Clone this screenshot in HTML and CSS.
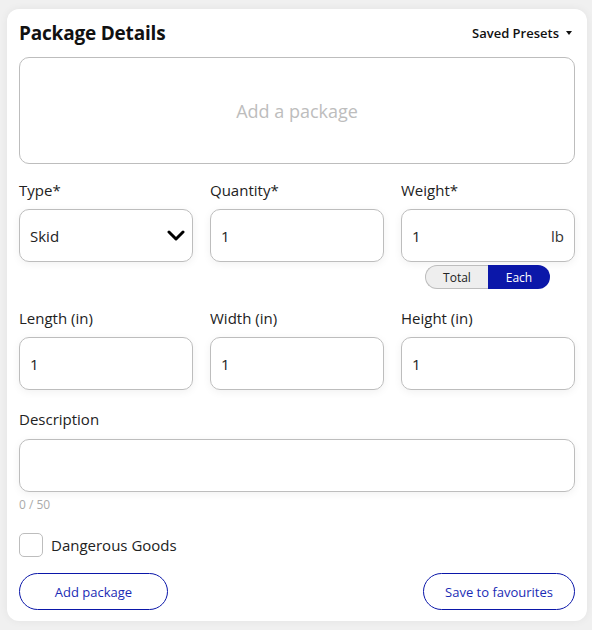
FILE: index.html
```html
<!DOCTYPE html>
<html lang="en">
<head>
    <meta charset="UTF-8">
    <title>Package Details</title>
    <link rel="stylesheet" href="styles.css">
</head>
<body>
    <div class="card">
        <div class="card-header">
            <h2>Package Details</h2>
            <span class="presets">Saved Presets <span class="caret"></span></span>
        </div>

        <div class="add-box">Add a package</div>

        <div class="row first-row">
            <div class="field">
                <label>Type*</label>
                <div class="input select">
                    <span>Skid</span>
                    <svg width="18" height="12" viewBox="0 0 18 12">
                        <polyline points="2,2 9,9 16,2" fill="none" stroke="#000" stroke-width="3" stroke-linecap="round" stroke-linejoin="round"/>
                    </svg>
                </div>
            </div>
            <div class="field">
                <label>Quantity*</label>
                <div class="input">1</div>
            </div>
            <div class="field">
                <label>Weight*</label>
                <div class="input">
                    <span>1</span>
                    <span class="unit">lb</span>
                </div>
                <div class="toggle">
                    <span class="toggle-off">Total</span>
                    <span class="toggle-on">Each</span>
                </div>
            </div>
        </div>

        <div class="row">
            <div class="field">
                <label>Length (in)</label>
                <div class="input">1</div>
            </div>
            <div class="field">
                <label>Width (in)</label>
                <div class="input">1</div>
            </div>
            <div class="field">
                <label>Height (in)</label>
                <div class="input">1</div>
            </div>
        </div>

        <div class="field description">
            <label>Description</label>
            <div class="input"></div>
            <div class="counter">0 / 50</div>
        </div>

        <div class="check-row">
            <span class="checkbox"></span>
            <span>Dangerous Goods</span>
        </div>

        <div class="actions">
            <button>Add package</button>
            <button>Save to favourites</button>
        </div>
    </div>
</body>
</html>
```

FILE: styles.css
```css
body {
    margin: 0;
    padding: 9px 5px 9px 7px;
    background: #f0f0f0;
    font-family: "Open Sans", "Noto Sans", sans-serif;
    color: #222;
}

.card {
    background: white;
    border-radius: 12px;
    padding: 12px 12px 11px;
    box-shadow: 0 0 8px rgba(0, 0, 0, 0.06);
}

.card-header {
    display: flex;
    justify-content: space-between;
    align-items: center;
    height: 24px;
    margin-bottom: 12px;
}

.card-header h2 {
    margin: 0;
    font-size: 19px;
    font-weight: 700;
    color: #111;
    letter-spacing: -0.2px;
}

.presets {
    font-size: 13px;
    font-weight: 600;
    color: #111;
    padding-right: 3px;
    display: flex;
    align-items: center;
    gap: 7px;
}

.caret {
    width: 0;
    height: 0;
    border-left: 3px solid transparent;
    border-right: 3px solid transparent;
    border-top: 4px solid #111;
}

.add-box {
    height: 105px;
    border: 1px solid #bdbdbd;
    border-radius: 10px;
    display: flex;
    align-items: center;
    justify-content: center;
    font-size: 18px;
    color: #bdbdbd;
}

.row {
    display: grid;
    grid-template-columns: repeat(3, 1fr);
    column-gap: 17px;
    margin-top: 17px;
}

.first-row {
    margin-top: 14px;
}

.field label {
    display: block;
    font-size: 15px;
    line-height: 24px;
    margin-bottom: 7px;
}

.input {
    height: 51px;
    border: 1px solid #bdbdbd;
    border-radius: 10px;
    box-shadow: 0 2px 8px rgba(0, 0, 0, 0.06);
    display: flex;
    align-items: center;
    justify-content: space-between;
    padding: 0 10px;
    font-size: 15px;
    color: #222;
}

.select svg {
    margin-right: -3px;
}

.unit {
    color: #333;
}

.toggle {
    display: flex;
    width: 125px;
    height: 24px;
    margin: 3px 0 0 24px;
    font-size: 12px;
}

.toggle span {
    flex: 1;
    display: flex;
    align-items: center;
    justify-content: center;
}

.toggle-off {
    background: #eeeeee;
    border: 1px solid #bdbdbd;
    border-right: none;
    border-radius: 12px 0 0 12px;
    color: #222;
}

.toggle-on {
    background: #0b17a9;
    color: white;
    border-radius: 0 12px 12px 0;
}

.description {
    margin-top: 17px;
}

.description label {
    margin-bottom: 8px;
}

.counter {
    font-size: 12px;
    color: #aaa;
    line-height: 16px;
    margin-top: 5px;
}

.check-row {
    display: flex;
    align-items: center;
    gap: 8px;
    margin-top: 20px;
    font-size: 15px;
}

.checkbox {
    width: 22px;
    height: 22px;
    border: 1px solid #bdbdbd;
    border-radius: 5px;
}

.actions {
    display: flex;
    justify-content: space-between;
    margin-top: 16px;
}

.actions button {
    height: 37px;
    padding: 0 21px;
    background: white;
    border: 1px solid #0b17a9;
    border-radius: 19px;
    color: #1a2bb5;
    font-family: inherit;
    font-size: 13px;
}

.actions button:first-child {
    width: 149px;
}
```
